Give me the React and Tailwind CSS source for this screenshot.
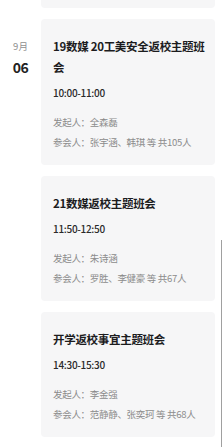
const meetings = [
  {
    title: "19数媒 20工美安全返校主题班会",
    time: "10:00-11:00",
    host: "全森磊",
    members: "张宇涵、韩琪",
    count: 105,
  },
  {
    title: "21数媒返校主题班会",
    time: "11:50-12:50",
    host: "朱诗涵",
    members: "罗胜、李健豪",
    count: 67,
  },
  {
    title: "开学返校事宜主题班会",
    time: "14:30-15:30",
    host: "李金强",
    members: "范静静、张奕珂",
    count: 68,
  },
]

const MeetingCard = ({ item }) => (
  <div className="rounded-[4px] bg-[#f6f6f7] pl-3 pr-2 pt-[17px] pb-[13px]">
    <div className="text-[11.5px] leading-[21px] tracking-[-0.3px] font-semibold text-[#1c1c1e]">{item.title}</div>
    <div className="mt-[7px] text-[10px] leading-[16px] tracking-[-0.3px] font-medium text-[#2a2a2a]">{item.time}</div>
    <div className="mt-[11px] text-[9.5px] leading-[20px] tracking-[-0.3px] text-[#8c8c8c]">
      <div>发起人：{item.host}</div>
      <div>
        参会人：{item.members} 等 共{item.count}人
      </div>
    </div>
  </div>
)

export default function App() {
  return (
    <div
      className="relative w-[224px] h-[447px] overflow-hidden bg-white"
      style={{ fontFamily: '"Noto Sans CJK SC", "Noto Sans", sans-serif' }}
    >
      <div className="flex">
        {/* date column */}
        <div className="w-[41px] shrink-0 flex flex-col items-center">
          <div className="h-[19px]" />
          <div className="pt-[17px] flex flex-col items-center">
            <div className="text-[9.5px] leading-[21px] text-[#8f8f8f]">9月</div>
            <div className="text-[14px] leading-[20px] tracking-[-0.5px] font-bold text-[#222]">06</div>
          </div>
        </div>

        {/* cards */}
        <div className="w-[174px] flex flex-col gap-[11px]">
          <div className="h-[8px] rounded-b-[4px] bg-[#f6f6f7]" />
          {meetings.map((m) => (
            <MeetingCard key={m.title} item={m} />
          ))}
        </div>
      </div>

      {/* scroll indicator */}
      <div className="absolute right-[2px] top-[240px] h-[220px] w-px bg-[#a0a0a0]" />
    </div>
  )
}
